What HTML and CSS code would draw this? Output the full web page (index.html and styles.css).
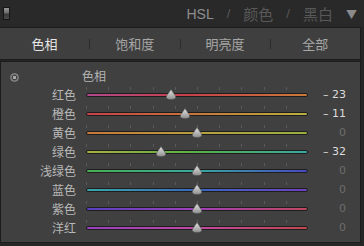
FILE: index.html
```html
<!DOCTYPE html>
<html lang="zh">
<head>
    <meta charset="UTF-8">
    <title>HSL</title>
    <link rel="stylesheet" href="styles.css">
</head>
<body>
    <div class="cabecera">
        <div class="interruptor"></div>
        <div class="modos">
            <span class="modo activo">HSL</span>
            <span class="barra">/</span>
            <span class="modo">颜色</span>
            <span class="barra">/</span>
            <span class="modo">黑白</span>
            <span class="flecha">▼</span>
        </div>
    </div>

    <div class="pestanas">
        <div class="pestana activa">色相</div>
        <div class="sep"></div>
        <div class="pestana">饱和度</div>
        <div class="sep"></div>
        <div class="pestana">明亮度</div>
        <div class="sep"></div>
        <div class="pestana">全部</div>
    </div>

    <div class="panel">
        <div class="fila titulo">
            <div class="objetivo"></div>
            <span>色相</span>
        </div>
        <div id="filas"></div>
    </div>

    <script>
        const colores = [
            { nombre: "红色", valor: -23, pista: "linear-gradient(to right, #b04a8e, #c8404a 45%, #c87a3a)" },
            { nombre: "橙色", valor: -11, pista: "linear-gradient(to right, #c8404a, #c8783a 50%, #b8b040)" },
            { nombre: "黄色", valor: 0, pista: "linear-gradient(to right, #c8783a, #b8a040 50%, #98b040)" },
            { nombre: "绿色", valor: -32, pista: "linear-gradient(to right, #a8b040, #58b048 50%, #38a8a0)" },
            { nombre: "浅绿色", valor: 0, pista: "linear-gradient(to right, #48b050, #38a8a0 50%, #4848c0)" },
            { nombre: "蓝色", valor: 0, pista: "linear-gradient(to right, #38a8a8, #3868c0 50%, #7040c0)" },
            { nombre: "紫色", valor: 0, pista: "linear-gradient(to right, #5840c0, #a040b8 50%, #c04860)" },
            { nombre: "洋红", valor: 0, pista: "linear-gradient(to right, #9840c0, #c048a0 50%, #c04850)" }
        ];

        const filas = document.querySelector('#filas');
        colores.forEach((c) => {
            const fila = document.createElement("div");
            fila.className = "fila";
            const pos = 50 + c.valor / 2;
            const texto = c.valor === 0 ? "0" : "– " + Math.abs(c.valor);
            fila.innerHTML = `
                <span class="etiqueta">${c.nombre}</span>
                <div class="deslizador">
                    <div class="marcas"></div>
                    <div class="pista" style="background: ${c.pista}"></div>
                    <svg class="pulgar" style="left: ${pos}%" width="12" height="11" viewBox="0 0 12 11">
                        <defs>
                            <linearGradient id="g" x1="0" y1="0" x2="0" y2="1">
                                <stop offset="0" stop-color="#e4e4e4"/>
                                <stop offset="1" stop-color="#8e8e8e"/>
                            </linearGradient>
                        </defs>
                        <path d="M6 0.5 L10.5 7 Q11.5 10.5 6 10.5 Q0.5 10.5 1.5 7 Z" fill="url(#g)" stroke="#555" stroke-width="0.6"/>
                    </svg>
                </div>
                <span class="valor ${c.valor === 0 ? 'cero' : ''}">${texto}</span>`;
            filas.appendChild(fila);
        });
    </script>
</body>
</html>
```

FILE: styles.css
```css
body {
    margin: 0;
    width: 364px;
    height: 246px;
    background-color: #262626;
    font-family: "Noto Sans CJK SC", "Liberation Sans", sans-serif;
    overflow: hidden;
}

.cabecera {
    height: 27px;
    display: flex;
    align-items: center;
    justify-content: space-between;
    background-color: #292929;
}

.interruptor {
    width: 5px;
    height: 11px;
    margin-left: 3px;
    border: 1px solid #151515;
    background: linear-gradient(#9a9a9a, #6a6a6a 45%, #3a3a3a 55%, #4a4a4a);
}

.modos {
    display: flex;
    align-items: center;
    gap: 13px;
    margin-right: 7px;
    font-size: 15px;
    color: #585858;
}

.modo.activo {
    color: #8e8e8e;
    font-family: "Liberation Sans", sans-serif;
    font-size: 14px;
}

.barra {
    font-family: "Liberation Sans", sans-serif;
    font-size: 13px;
}

.flecha {
    font-size: 11px;
    color: #8a8a8a;
}

.pestanas {
    display: flex;
    align-items: center;
    height: 31px;
    margin-right: 3px;
    background-color: #3f3f3f;
    border: 1px solid #1c1c1c;
    border-left-width: 0;
}

.pestana {
    flex: 1;
    text-align: center;
    font-size: 13px;
    color: #a6a6a6;
}

.pestana.activa {
    color: #e6e6e6;
}

.sep {
    width: 1px;
    height: 10px;
    background-color: #2c2c2c;
}

.panel {
    margin-top: 1px;
    margin-right: 3px;
    height: 176px;
    padding-top: 4px;
    background-color: #404040;
    border: 1px solid #1c1c1c;
}

.fila {
    display: flex;
    align-items: center;
    height: 19px;
}

.titulo {
    font-size: 12px;
    color: #b4b4b4;
}

.titulo span {
    margin-left: 63px;
}

.objetivo {
    width: 7px;
    height: 7px;
    margin-left: 9px;
    margin-top: 3px;
    border-radius: 50%;
    border: 1px solid #8a8a8a;
    background: radial-gradient(circle, #a8a8a8 0 1.5px, #404040 1.5px 2.5px, #6a6a6a 2.5px);
}

.etiqueta {
    width: 75px;
    text-align: right;
    font-size: 12px;
    color: #b8b8b8;
}

.deslizador {
    position: relative;
    width: 222px;
    height: 19px;
    margin-left: 10px;
}

.pista {
    position: absolute;
    left: 0;
    right: 0;
    top: 8px;
    height: 2px;
    border: 1px solid #1e1e1e;
    border-radius: 2px;
}

.marcas {
    position: absolute;
    left: 0;
    right: 0;
    top: 2px;
    height: 3px;
    background: repeating-linear-gradient(to right, #5a5a5a 0 1px, transparent 1px 22.2px);
}

.pulgar {
    position: absolute;
    top: 4px;
    margin-left: -6px;
}

.valor {
    width: 38px;
    text-align: right;
    font-family: "DejaVu Sans", sans-serif;
    font-size: 11px;
    color: #dcdcdc;
}

.valor.cero {
    color: #6c6c6c;
}
```
